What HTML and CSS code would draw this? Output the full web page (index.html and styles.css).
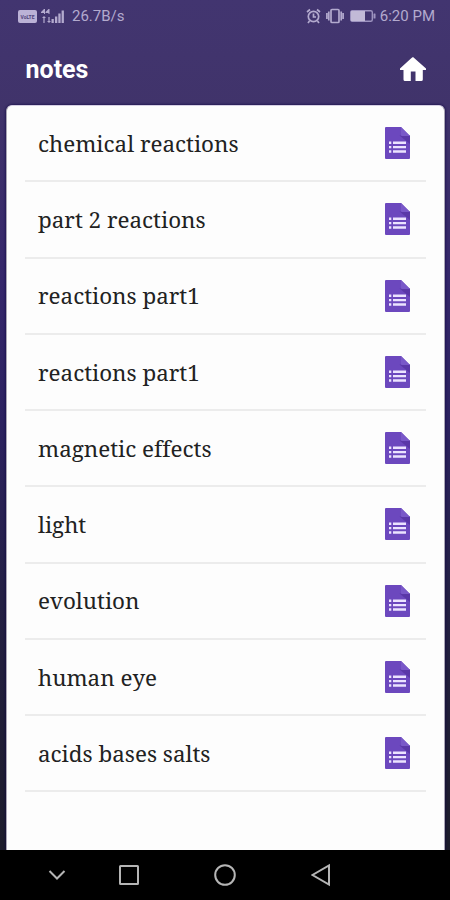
FILE: index.html
```html
<!DOCTYPE html>
<html lang="en">
<head>
<meta charset="utf-8">
<title>notes</title>
<link rel="stylesheet" href="styles.css">
</head>
<body>
<svg width="0" height="0" class="defs">
  <symbol id="doc" viewBox="0 0 25 32">
    <path d="M1 0H16L25 9V31Q25 32 24 32H1Q0 32 0 31V1Q0 0 1 0Z" fill="#6c48be"/>
    <path d="M14.500 8.500H25V17Z" fill="#5a37a8"/>
    <path d="M16 0L25 9H17Q16 9 16 8Z" fill="#7958c8"/>
    <path d="M4 14.500h2.300v2.400H4zM8 14.500h13v2.400H8zM4 18.900h2.300v2.400H4zM8 18.900h13v2.400H8zM4 23.300h2.300v2.400H4zM8 23.300h13v2.400H8z" fill="#ece3ff"/>
  </symbol>
</svg>
<div class="phone">
  <div class="status">
    <svg class="volte" width="19" height="13" viewBox="0 0 19 13"><rect width="19" height="13" rx="2" fill="#bbb2d6"/><text x="2.500" y="8.800" textLength="14" lengthAdjust="spacingAndGlyphs" class="volte-text">VoLTE</text></svg>
    <svg class="signal" width="24" height="15" viewBox="0 0 24 15"><g fill="#b3aace"><path d="M4 0v5H3V4H0V3l3-3zM8.500 0v5h-1V4h-3V3l3-3z"/><path d="M1 9l2-2 2 2H3.600v5H2.400V9zM6 12l2 2 2-2H8.600V8H7.400v4z"/><rect x="10.500" y="10" width="2.300" height="4"/><rect x="14" y="7.500" width="2.300" height="6.500"/><rect x="17.300" y="4.500" width="2.300" height="9.500"/><rect x="20.600" y="1.500" width="2.300" height="12.500"/></g></svg>
    <span class="speed">26.7B/s</span>
    <svg class="alarm" width="15" height="16" viewBox="0 0 15 16" fill="none" stroke="#b3aace" stroke-width="1.700"><circle cx="7.500" cy="8.500" r="5.200"/><path d="M1 4L4 1.500M14 4L11 1.500M7.500 5.500V9H10M3.500 13L2 15M11.500 13L13 15"/></svg>
    <svg class="vibrate" width="18" height="16" viewBox="0 0 18 16" fill="none" stroke="#b3aace" stroke-width="1.700"><rect x="5" y="1.500" width="8" height="13" rx="1"/><path d="M2.800 3.500v9M.900 5v6M15.200 3.500v9M17.100 5v6"/></svg>
    <svg class="battery" width="26" height="12" viewBox="0 0 26 12"><rect x=".700" y=".700" width="21.600" height="10.600" rx="1.500" fill="none" stroke="#9d93bf" stroke-width="1.400"/><rect x="1" y="1" width="14" height="10" fill="#c2bad7"/><rect x="23.500" y="3.500" width="2" height="5" rx=".500" fill="#9d93bf"/></svg>
    <span class="clock">6:20 PM</span>
  </div>
  <header class="bar">
    <h1>notes</h1>
    <svg width="26" height="24" viewBox="0 0 26 24"><path d="M13 0L26 11.500V13H22.800V22.500Q22.800 24 21.300 24H15.500V14.500H10.800V24H5Q3.500 24 3.500 22.500V13H0V11.500L11.500 1Z" fill="#fff"/></svg>
  </header>
  <main class="card">
    <ul>
      <li><span>chemical reactions</span><svg class="doc"><use href="#doc"/></svg></li>
      <li><span>part 2 reactions</span><svg class="doc"><use href="#doc"/></svg></li>
      <li><span>reactions part1</span><svg class="doc"><use href="#doc"/></svg></li>
      <li><span>reactions part1</span><svg class="doc"><use href="#doc"/></svg></li>
      <li><span>magnetic effects</span><svg class="doc"><use href="#doc"/></svg></li>
      <li><span>light</span><svg class="doc"><use href="#doc"/></svg></li>
      <li><span>evolution</span><svg class="doc"><use href="#doc"/></svg></li>
      <li><span>human eye</span><svg class="doc"><use href="#doc"/></svg></li>
      <li><span>acids bases salts</span><svg class="doc"><use href="#doc"/></svg></li>
    </ul>
  </main>
  <nav class="nav">
    <svg width="18" height="24" viewBox="0 0 18 24"><path d="M1.500 8L9 15.500 16.500 8"/></svg>
    <svg width="20" height="24" viewBox="0 0 20 24"><rect x="1" y="3" width="18" height="18" rx=".500"/></svg>
    <svg width="22" height="24" viewBox="0 0 22 24"><circle cx="11" cy="12" r="9.800"/></svg>
    <svg width="20" height="24" viewBox="0 0 20 24"><path d="M18 2.500V21.500L1.500 12Z"/></svg>
  </nav>
</div>
</body>
</html>
```
FILE: styles.css
```css
* { box-sizing: border-box; }
body { margin: 0; }
.defs { display: block; }
.phone {
  width: 450px;
  height: 900px;
  display: flex;
  flex-direction: column;
  overflow: hidden;
  background: linear-gradient(#423570 0, #40336a 110px, #35276b 280px, #2c2260 420px, #242044 600px, #1d1c2b 850px);
  font-family: Roboto, sans-serif;
}
.status {
  height: 32px;
  display: flex;
  align-items: center;
  padding: 0 15px 0 18px;
  color: #b3aace;
  font-size: 15px;
  white-space: nowrap;
}
.status svg { flex: none; }
.volte-text { font: bold 6px Roboto, sans-serif; fill: #51447c; }
.signal { margin-left: 4px; }
.speed { margin-left: 7px; }
.alarm { margin-left: auto; }
.vibrate { margin-left: 5px; }
.battery { margin-left: 6px; }
.clock { margin-left: 4px; }
.bar {
  height: 73px;
  display: flex;
  align-items: center;
  justify-content: space-between;
  padding: 0 24px 0 25.5px;
}
.bar h1 {
  margin: 0;
  padding-top: 2px;
  color: #fff;
  font-size: 25px;
  font-weight: 700;
  line-height: 28px;
}
.card {
  flex: 1;
  margin: 0 5px 0 6px;
  padding: 0 18px;
  border: 1px solid #aaa6b5;
  border-top-color: #d6d0e4;
  border-bottom: 0;
  border-radius: 6px 6px 0 0;
  background: #fdfdfd;
  box-shadow: 0 0 3px #0d0540;
}
.card ul { margin: 0; padding: 0; list-style: none; }
.card li {
  height: 76.25px;
  display: flex;
  align-items: center;
  justify-content: space-between;
  padding: 0 16px 0 13px;
  border-bottom: 2px solid #ececec;
  color: #222;
  font-family: "Noto Serif", "Droid Serif", "DejaVu Serif Condensed", "DejaVu Serif", serif;
  font-size: 22.4px;
  line-height: 30px;
  font-variant-ligatures: none;
}
.card li span { padding-top: 1.4px; }
.doc { width: 25px; height: 32px; }
.nav {
  height: 50px;
  display: flex;
  align-items: center;
  padding-left: 48px;
  background: #000;
}
.nav svg { fill: none; stroke: #b5b5b5; stroke-width: 2; }
.nav svg:nth-child(2) { margin-left: 53px; }
.nav svg:nth-child(3) { margin-left: 75px; }
.nav svg:nth-child(4) { margin-left: 75px; }
```
